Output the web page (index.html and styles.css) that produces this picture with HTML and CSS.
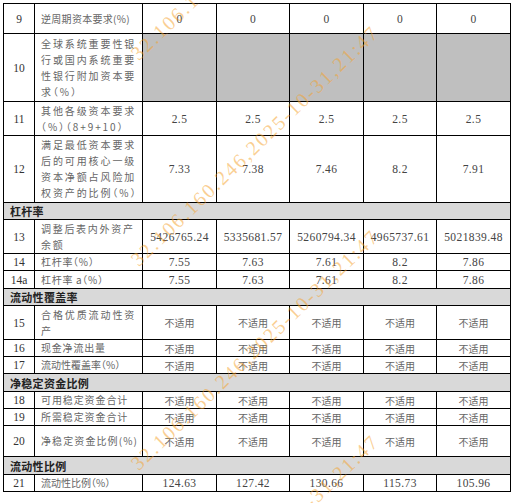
FILE: index.html
```html
<!DOCTYPE html>
<html lang="zh-CN">
<head>
<meta charset="utf-8">
<title>资本与流动性指标</title>
<link rel="stylesheet" href="styles.css">
</head>
<body>
<div class="page">
<table class="report">
<colgroup>
<col class="c-no"><col class="c-label"><col class="c-v1"><col class="c-v2"><col class="c-v1"><col class="c-v2"><col class="c-v1">
</colgroup>
<tbody>
<tr class="h30"><td class="no">9</td><td class="label ls03 one">逆周期资本要求(%)</td><td class="val">0</td><td class="val">0</td><td class="val">0</td><td class="val">0</td><td class="val">0</td></tr>
<tr class="h68"><td class="no">10</td><td class="label ls19">全球系统重要性银行或国内系统重要性银行附加资本要求（%）</td><td class="blank"></td><td class="blank"></td><td class="blank"></td><td class="blank"></td><td class="blank"></td></tr>
<tr class="h34"><td class="no">11</td><td class="label ls19">其他各级资本要求<br>（%）（8+9+10）</td><td class="val">2.5</td><td class="val">2.5</td><td class="val">2.5</td><td class="val">2.5</td><td class="val">2.5</td></tr>
<tr class="h67"><td class="no">12</td><td class="label ls19">满足最低资本要求后的可用核心一级资本净额占风险加权资产的比例（%）</td><td class="val">7.33</td><td class="val">7.38</td><td class="val">7.46</td><td class="val">8.2</td><td class="val">7.91</td></tr>
<tr class="group h17"><td colspan="7">杠杆率</td></tr>
<tr class="h34"><td class="no">13</td><td class="label ls17">调整后表内外资产余额</td><td class="val">5426765.24</td><td class="val">5335681.57</td><td class="val">5260794.34</td><td class="val">4965737.61</td><td class="val">5021839.48</td></tr>
<tr class="h17"><td class="no">14</td><td class="label ls07 one">杠杆率（%）</td><td class="val">7.55</td><td class="val">7.63</td><td class="val">7.61</td><td class="val">8.2</td><td class="val">7.86</td></tr>
<tr class="h18"><td class="no">14a</td><td class="label ls07 one">杠杆率 a（%）</td><td class="val">7.55</td><td class="val">7.63</td><td class="val">7.61</td><td class="val">8.2</td><td class="val">7.86</td></tr>
<tr class="group h17"><td colspan="7">流动性覆盖率</td></tr>
<tr class="h34"><td class="no">15</td><td class="label ls19">合格优质流动性资产</td><td class="val na">不适用</td><td class="val na">不适用</td><td class="val na">不适用</td><td class="val na">不适用</td><td class="val na">不适用</td></tr>
<tr class="h17"><td class="no">16</td><td class="label ls08 one">现金净流出量</td><td class="val na">不适用</td><td class="val na">不适用</td><td class="val na">不适用</td><td class="val na">不适用</td><td class="val na">不适用</td></tr>
<tr class="h17"><td class="no">17</td><td class="label ls00 one">流动性覆盖率（%）</td><td class="val na">不适用</td><td class="val na">不适用</td><td class="val na">不适用</td><td class="val na">不适用</td><td class="val na">不适用</td></tr>
<tr class="group h18"><td colspan="7">净稳定资金比例</td></tr>
<tr class="h17"><td class="no">18</td><td class="label ls09 one">可用稳定资金合计</td><td class="val na">不适用</td><td class="val na">不适用</td><td class="val na">不适用</td><td class="val na">不适用</td><td class="val na">不适用</td></tr>
<tr class="h17"><td class="no">19</td><td class="label ls09 one">所需稳定资金合计</td><td class="val na">不适用</td><td class="val na">不适用</td><td class="val na">不适用</td><td class="val na">不适用</td><td class="val na">不适用</td></tr>
<tr class="h31"><td class="no">20</td><td class="label ls11 one">净稳定资金比例(%)</td><td class="val na">不适用</td><td class="val na">不适用</td><td class="val na">不适用</td><td class="val na">不适用</td><td class="val na">不适用</td></tr>
<tr class="group h18"><td colspan="7">流动性比例</td></tr>
<tr class="h17"><td class="no">21</td><td class="label ls00 one">流动性比例（%）</td><td class="val">124.63</td><td class="val">127.42</td><td class="val">130.66</td><td class="val">115.73</td><td class="val">105.96</td></tr>
</tbody>
</table>
<div class="watermark" aria-hidden="true">
<span class="wm wm-a">32.106.160.246,2025-10-31,21:47</span>
<span class="wm wm-b">32.106.160.246,2025-10-31,21:47</span>
<span class="wm wm-c">32.106.160.246,2025-10-31,21:47</span>
<span class="wm wm-d">32.106.160.246,2025-10-31,21:47</span>
</div>
</div>
</body>
</html>
```

FILE: styles.css
```css
html, body {
  margin: 0;
  padding: 0;
  background: #fff;
}

.page {
  position: relative;
  width: 513px;
  height: 503px;
  overflow: hidden;
  padding: 3px 0 0 3px;
  box-sizing: border-box;
}

.report {
  border-collapse: collapse;
  table-layout: fixed;
  width: 508px;
}

.report td {
  border: 1px solid #000;
  padding: 0;
  vertical-align: middle;
}

.c-no { width: 31px; }
.c-label { width: 108px; }
.c-v1 { width: 74px; }
.c-v2 { width: 73px; }

tr.h17 { height: 17px; }
tr.h18 { height: 18px; }
tr.h30 { height: 30px; }
tr.h31 { height: 31px; }
tr.h34 { height: 34px; }
tr.h67 { height: 67px; }
tr.h68 { height: 68px; }

.no {
  text-align: center;
  font-family: "Liberation Serif", serif;
  font-size: 11.5px;
  color: #333;
}

.report .label {
  padding: 0 3px 0 6px;
  font-family: "Noto Sans CJK SC", sans-serif;
  font-size: 10px;
  line-height: 16px;
  color: #666;
  font-feature-settings: "halt";
}

.report .label.one {
  white-space: nowrap;
  overflow: hidden;
}

.ls00 { letter-spacing: 0; }
.ls03 { letter-spacing: 0.3px; }
.ls07 { letter-spacing: 0.7px; }
.ls08 { letter-spacing: 0.8px; }
.ls09 { letter-spacing: 0.9px; }
.ls11 { letter-spacing: 1.1px; }
.ls17 { letter-spacing: 1.7px; }
.ls19 { letter-spacing: 1.9px; }

.val {
  text-align: center;
  font-family: "Liberation Serif", serif;
  font-size: 11.5px;
  letter-spacing: 0.4px;
  color: #444;
}

.val.na {
  font-family: "Noto Sans CJK SC", sans-serif;
  font-size: 10px;
  letter-spacing: 0;
  color: #666;
}

.blank {
  background: #bfbfbf;
}

.report .group td {
  background: #d9d9d9;
  font-family: "Noto Sans CJK SC", sans-serif;
  font-weight: 700;
  font-size: 11px;
  letter-spacing: 0.3px;
  color: #222;
  padding-left: 6px;
  line-height: 16px;
}

.watermark {
  position: absolute;
  left: 0;
  top: 0;
  width: 513px;
  height: 503px;
  overflow: hidden;
  pointer-events: none;
}

.wm {
  position: absolute;
  left: 255px;
  white-space: nowrap;
  font-family: "Liberation Serif", serif;
  font-size: 20px;
  letter-spacing: 2px;
  color: rgba(245, 160, 40, 0.5);
  transform: translate(-50%, -50%) rotate(-44deg);
}

.wm-a { top: -60px; }
.wm-b { top: 146px; }
.wm-c { top: 350px; }
.wm-d { top: 555px; }
```
